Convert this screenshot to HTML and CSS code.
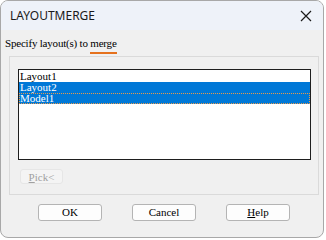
FILE: index.html
```html
<!DOCTYPE html>
<html lang="en">

<head>
  <meta charset="UTF-8">
  <title>LAYOUTMERGE</title>
  <link rel="stylesheet" href="styles.css">
</head>

<body>
  <div class="window">
    <div class="titlebar">
      <span class="title">LAYOUTMERGE</span>
      <svg class="close" width="12" height="12" viewBox="0 0 12 12">
        <path d="M1 1 L11 11 M11 1 L1 11" stroke="#1a1a1a" stroke-width="1.2" fill="none" />
      </svg>
    </div>

    <div class="tabs">
      <span class="tab-text">Specify layout(s) to <span class="tab-mark">merge</span></span>
    </div>

    <div class="panel">
      <div class="list">
        <div class="list-item">Layout1</div>
        <div class="list-item selected">Layout2</div>
        <div class="list-item selected focused">Model1</div>
      </div>
      <button class="pick-btn" disabled><u>P</u>ick&lt;</button>
    </div>

    <div class="actions">
      <button class="btn">OK</button>
      <button class="btn">Cancel</button>
      <button class="btn"><u>H</u>elp</button>
    </div>
  </div>
</body>

</html>
```

FILE: styles.css
```css
* {
  margin: 0;
  padding: 0;
  box-sizing: border-box;
}

body {
  background: #ffffff;
  font-family: "Liberation Serif", "Times New Roman", serif;
  font-size: 11px;
  color: #000;
}

.window {
  width: 324px;
  height: 238px;
  border: 1px solid #a8a8a8;
  border-radius: 8px;
  overflow: hidden;
  background: #f0f0f0;
  display: flex;
  flex-direction: column;
}

.titlebar {
  height: 29px;
  flex-shrink: 0;
  display: flex;
  align-items: center;
  justify-content: space-between;
  padding: 0 9px 0 9px;
  background: #eef2f9;
}

.title {
  font-family: "Noto Sans", "Open Sans", sans-serif;
  font-size: 12px;
  color: #1a1a1a;
}

.close {
  margin-right: 2px;
}

.tabs {
  height: 26px;
  flex-shrink: 0;
  padding: 7px 0 0 4px;
  line-height: 13px;
  letter-spacing: -0.2px;
}

.tab-mark {
  display: inline-block;
  border-bottom: 2px solid #e5711d;
  line-height: 13px;
  padding-bottom: 2px;
}

.panel {
  height: 139px;
  margin: 0 4px 0 8px;
  border: 1px solid #dadada;
  padding: 12px 7px 0 8px;
}

.list {
  height: 91px;
  border: 1px solid #1e1e1e;
  background: #fff;
  padding-top: 1px;
}

.list-item {
  height: 11px;
  line-height: 11px;
  padding-left: 1px;
}

.list-item.selected {
  background: #0078d7;
  color: #fff;
}

.list-item.focused {
  outline: 1px dotted #e89a4c;
  outline-offset: -1px;
}

.pick-btn {
  margin: 9px 0 0 2px;
  width: 43px;
  height: 15px;
  border: 1px solid #e6e6e6;
  border-radius: 3px;
  background: #f4f4f4;
  color: #a0a0a0;
  font-family: inherit;
  font-size: 11px;
}

.actions {
  display: flex;
  gap: 30px;
  padding: 9px 0 0 37px;
}

.btn {
  width: 64px;
  height: 17px;
  border: 1px solid #b4b4b4;
  border-radius: 3px;
  background: #fdfdfd;
  color: #000;
  font-family: inherit;
  font-size: 11px;
  line-height: 13px;
}
```
